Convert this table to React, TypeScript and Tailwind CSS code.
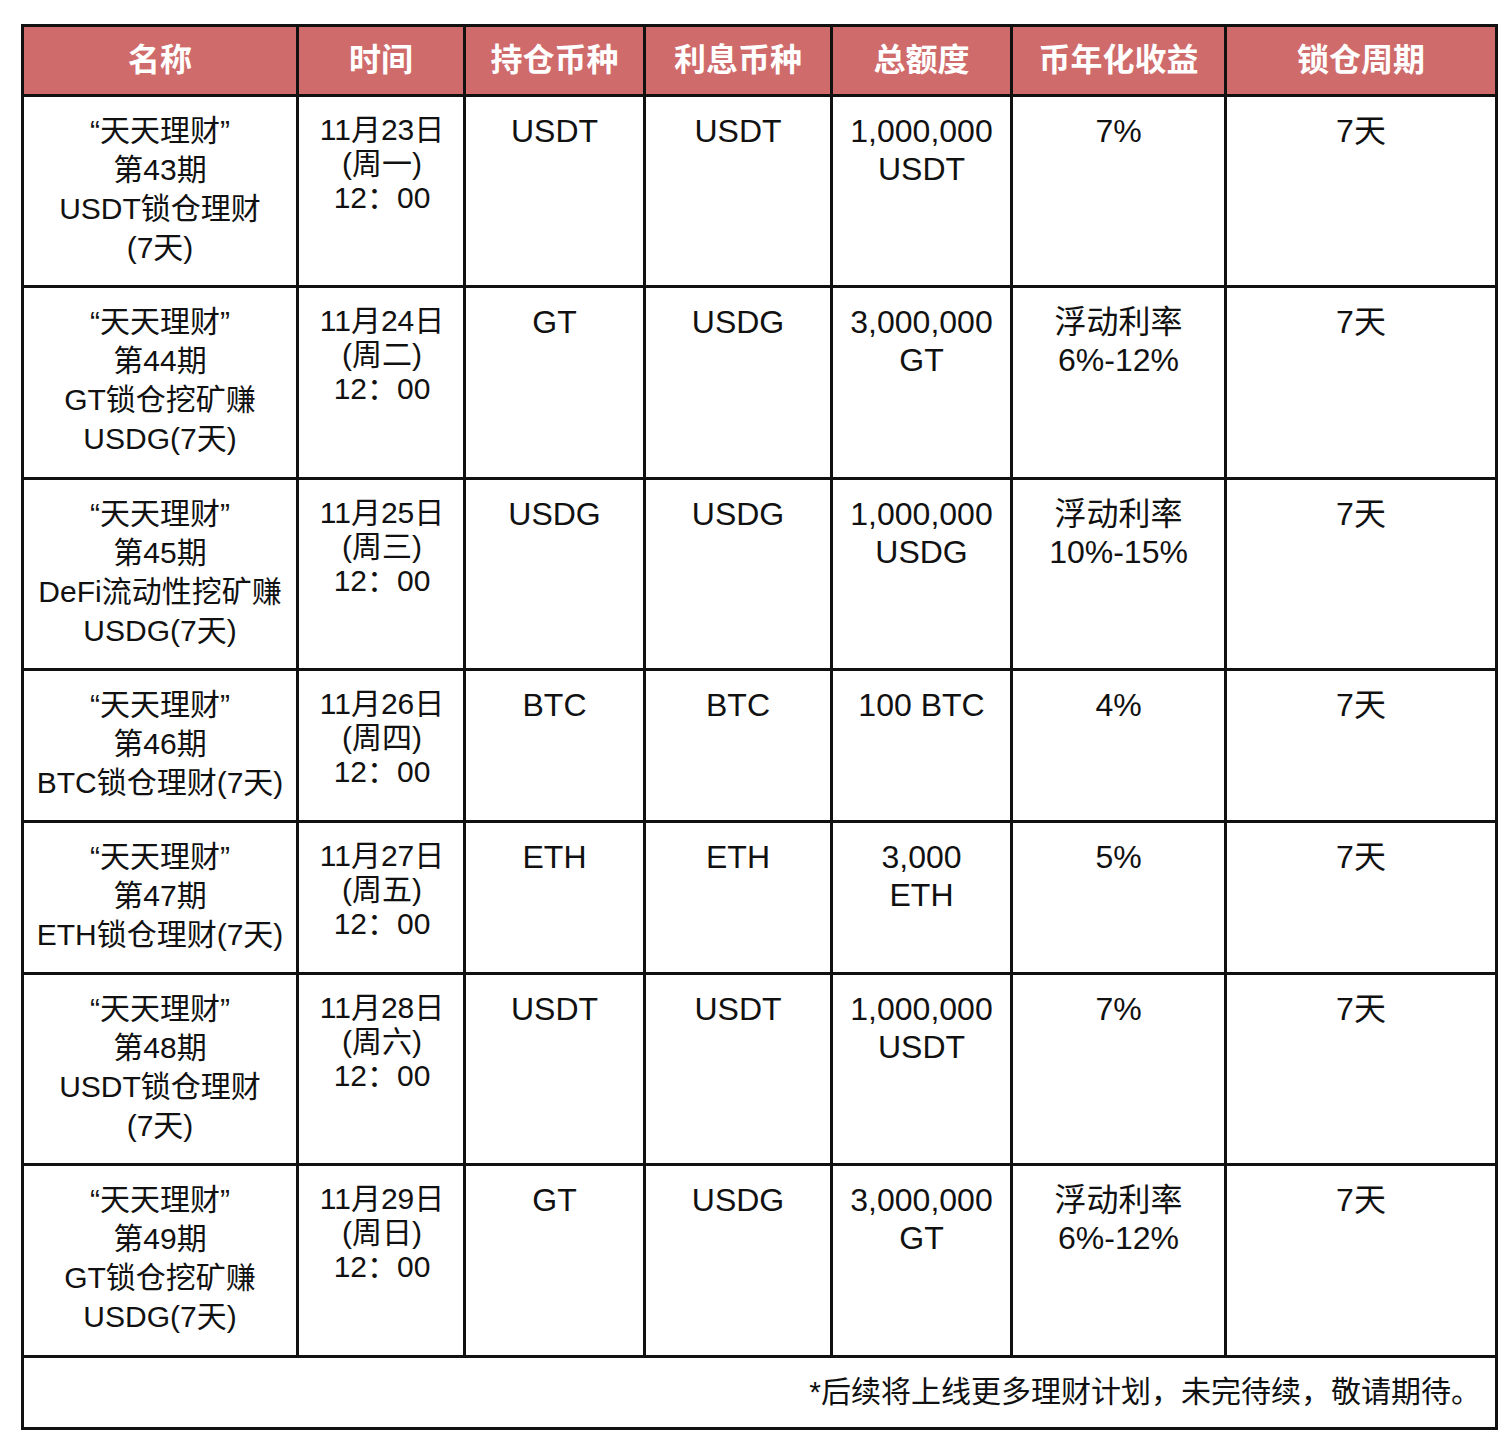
const rows = [
  { name: ['“天天理财”', '第43期', 'USDT锁仓理财', '(7天)'], time: ['11月23日', '(周一)', '12：00'], hold: 'USDT', interest: 'USDT', total: ['1,000,000', 'USDT'], rate: ['7%'], h: 'h-[191px]' },
  { name: ['“天天理财”', '第44期', 'GT锁仓挖矿赚', 'USDG(7天)'], time: ['11月24日', '(周二)', '12：00'], hold: 'GT', interest: 'USDG', total: ['3,000,000', 'GT'], rate: ['浮动利率', '6%-12%'], h: 'h-[192px]' },
  { name: ['“天天理财”', '第45期', 'DeFi流动性挖矿赚', 'USDG(7天)'], time: ['11月25日', '(周三)', '12：00'], hold: 'USDG', interest: 'USDG', total: ['1,000,000', 'USDG'], rate: ['浮动利率', '10%-15%'], h: 'h-[191px]' },
  { name: ['“天天理财”', '第46期', 'BTC锁仓理财(7天)'], time: ['11月26日', '(周四)', '12：00'], hold: 'BTC', interest: 'BTC', total: ['100 BTC'], rate: ['4%'], h: 'h-[152px]' },
  { name: ['“天天理财”', '第47期', 'ETH锁仓理财(7天)'], time: ['11月27日', '(周五)', '12：00'], hold: 'ETH', interest: 'ETH', total: ['3,000', 'ETH'], rate: ['5%'], h: 'h-[152px]' },
  { name: ['“天天理财”', '第48期', 'USDT锁仓理财', '(7天)'], time: ['11月28日', '(周六)', '12：00'], hold: 'USDT', interest: 'USDT', total: ['1,000,000', 'USDT'], rate: ['7%'], h: 'h-[191px]' },
  { name: ['“天天理财”', '第49期', 'GT锁仓挖矿赚', 'USDG(7天)'], time: ['11月29日', '(周日)', '12：00'], hold: 'GT', interest: 'USDG', total: ['3,000,000', 'GT'], rate: ['浮动利率', '6%-12%'], h: 'h-[192px]' },
]

const headers = ['名称', '时间', '持仓币种', '利息币种', '总额度', '币年化收益', '锁仓周期']

function Lines({ lines }: { lines: string[] }) {
  return (
    <>
      {lines.map((l, i) => (
        <div key={i}>{l}</div>
      ))}
    </>
  )
}

export default function App() {
  const cell = 'border-[3px] border-[#111] align-top text-center pt-[14px] px-0 leading-[39px]'
  // value columns are set a touch larger than the name/time columns
  const big = 'border-[3px] border-[#111] align-top text-center pt-[15px] px-0 text-[32px] leading-[38px]'
  return (
    <div className="bg-white w-[1512px] h-[1447px] pt-[24px] pl-[21px] text-[#111] font-['Liberation_Sans','Noto_Sans_CJK_SC',sans-serif] text-[30px]">
      <table className="border-collapse table-fixed w-[1474px]">
        <colgroup>
          <col className="w-[275px]" />
          <col className="w-[167px]" />
          <col className="w-[180px]" />
          <col className="w-[187px]" />
          <col className="w-[180px]" />
          <col className="w-[214px]" />
          <col className="w-[271px]" />
        </colgroup>
        <thead>
          <tr className="h-[70px] bg-[#d06b6b]">
            {headers.map(h => (
              <th key={h} className="border-[3px] border-[#111] text-white font-bold text-[32px] align-middle pb-[1px]">
                {h}
              </th>
            ))}
          </tr>
        </thead>
        <tbody>
          {rows.map((r, i) => (
            <tr key={i} className={r.h}>
              <td className={cell}><Lines lines={r.name} /></td>
              <td className={cell}>
                <div className="leading-[34px] pt-[2px] pl-[2px]"><Lines lines={r.time} /></div>
              </td>
              <td className={big}>{r.hold}</td>
              <td className={big}>{r.interest}</td>
              <td className={big}><Lines lines={r.total} /></td>
              <td className={big}><Lines lines={r.rate} /></td>
              <td className={big}>7天</td>
            </tr>
          ))}
          <tr className="h-[72px]">
            <td colSpan={7} className="border-[3px] border-[#111] text-right pr-[14px] pb-[3px] align-middle text-[30px]">
              *后续将上线更多理财计划，未完待续，敬请期待。
            </td>
          </tr>
        </tbody>
      </table>
    </div>
  )
}
